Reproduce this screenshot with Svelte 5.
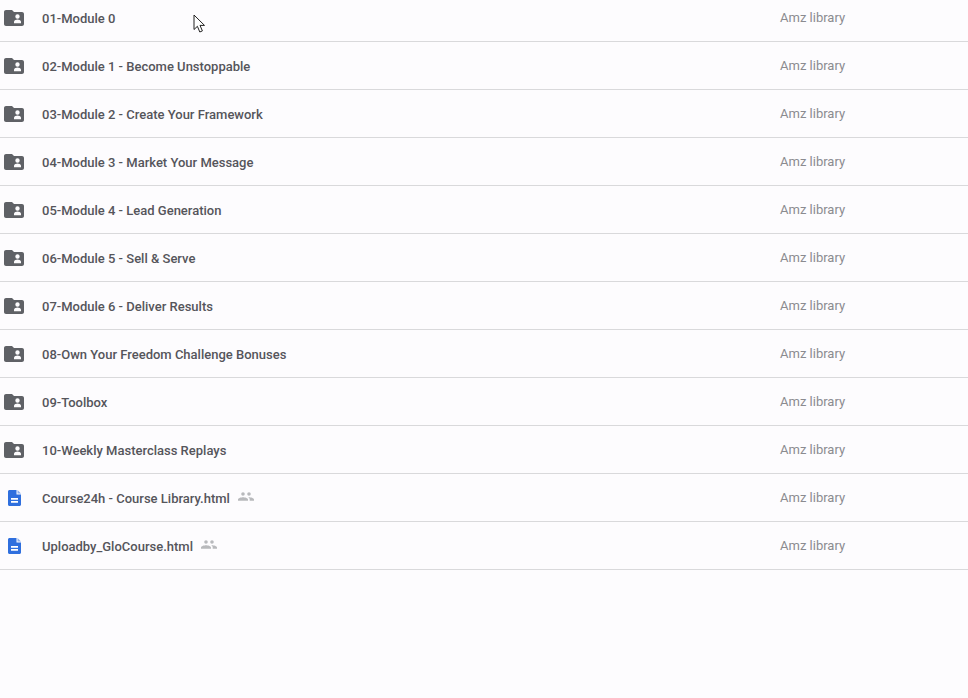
<script>
  const owner = 'Amz library';
  const items = [
    { name: '01-Module 0', kind: 'folder' },
    { name: '02-Module 1 - Become Unstoppable', kind: 'folder' },
    { name: '03-Module 2 - Create Your Framework', kind: 'folder' },
    { name: '04-Module 3 - Market Your Message', kind: 'folder' },
    { name: '05-Module 4 - Lead Generation', kind: 'folder' },
    { name: '06-Module 5 - Sell & Serve', kind: 'folder' },
    { name: '07-Module 6 - Deliver Results', kind: 'folder' },
    { name: '08-Own Your Freedom Challenge Bonuses', kind: 'folder' },
    { name: '09-Toolbox', kind: 'folder' },
    { name: '10-Weekly Masterclass Replays', kind: 'folder' },
    { name: 'Course24h - Course Library.html', kind: 'doc' },
    { name: 'Uploadby_GloCourse.html', kind: 'doc' }
  ];
</script>

<main class="list">
  {#each items as item}
    <div class="row">
      <div class="row__icon">
        {#if item.kind === 'folder'}
          <svg width="20" height="16" viewBox="0 0 20 16">
            <path fill="#5f6166" fill-rule="evenodd" d="M2 0h6l2 2h8c1.100 0 2 .9 2 2v10c0 1.100-.9 2-2 2H2c-1.100 0-2-.9-2-2V2C0 .9.900 0 2 0zM13.500 4.300a2.200 2.200 0 1 0 0 4.400 2.200 2.200 0 0 0 0-4.400zM10 13.200h7v-1.400c0-1.500-2.300-2.300-3.500-2.300s-3.500.8-3.500 2.300z"/>
          </svg>
        {:else}
          <svg class="row__doc" width="13" height="16" viewBox="0 0 13 16">
            <path fill="#2f6fde" d="M1.500 0H8.500V4.500H13v10c0 .8-.7 1.500-1.500 1.500h-10C.7 16 0 15.300 0 14.500v-13C0 .7.700 0 1.500 0z"/>
            <path fill="#2f6fde" opacity=".55" d="M9.500 0L13 3.500H9.500z"/>
            <path fill="#fff" d="M3 8h7v1.700H3zM3 11h7v1.700H3z"/>
          </svg>
        {/if}
      </div>
      <div class="row__name">
        <span>{item.name}</span>
        {#if item.kind === 'doc'}
          <svg class="row__shared" width="16" height="9" viewBox="0 0 16 8.500">
            <path fill="#b8b9bc" d="M11 3.600a1.800 1.800 0 1 0 0-3.600 1.800 1.800 0 0 0 0 3.600zM5 3.600A1.800 1.800 0 1 0 5 0a1.800 1.800 0 0 0 0 3.600zM5 4.900c-1.700 0-5 .8-5 2.400v1.200h10V7.300c0-1.600-3.300-2.400-5-2.400zM11 4.900l-.8.100c.9.500 1.500 1.300 1.500 2.300v1.200H16V7.300c0-1.600-3.300-2.400-5-2.400z"/>
          </svg>
        {/if}
      </div>
      <div class="row__owner">{owner}</div>
    </div>
  {/each}
</main>

<svg class="cursor" width="13" height="20" viewBox="0 0 13 20">
  <path fill="#fff" stroke="#222" stroke-width="1" d="M1 1v14.500l3.400-3.200 2.400 5.700 2.600-1.100-2.400-5.500H11.500z"/>
</svg>

<style>
  :global(body) {
    background: #fdfcfe;
    overflow: hidden;
  }

  .list {
    margin-top: -6px;
    font-family: Roboto, "Liberation Sans", sans-serif;
    font-size: 13px;
  }

  .row {
    display: flex;
    align-items: center;
    height: 47px;
    border-bottom: 1px solid #d9d9db;
  }

  .row__icon {
    width: 42px;
    flex: none;
    display: flex;
    justify-content: center;
    padding: 1px 14px 0 0;
    box-sizing: border-box;
  }

  .row__icon svg {
    display: block;
  }

  .row__doc {
    margin-left: 1px;
  }

  .row__name {
    flex: 1;
    display: flex;
    align-items: center;
    gap: 8px;
    padding-top: 2px;
    color: #55555b;
    font-weight: 500;
  }

  .row__shared {
    margin-top: -5px;
  }

  .row__owner {
    width: 188px;
    flex: none;
    color: #8b8b90;
  }

  .cursor {
    position: absolute;
    left: 193px;
    top: 14px;
  }
</style>
